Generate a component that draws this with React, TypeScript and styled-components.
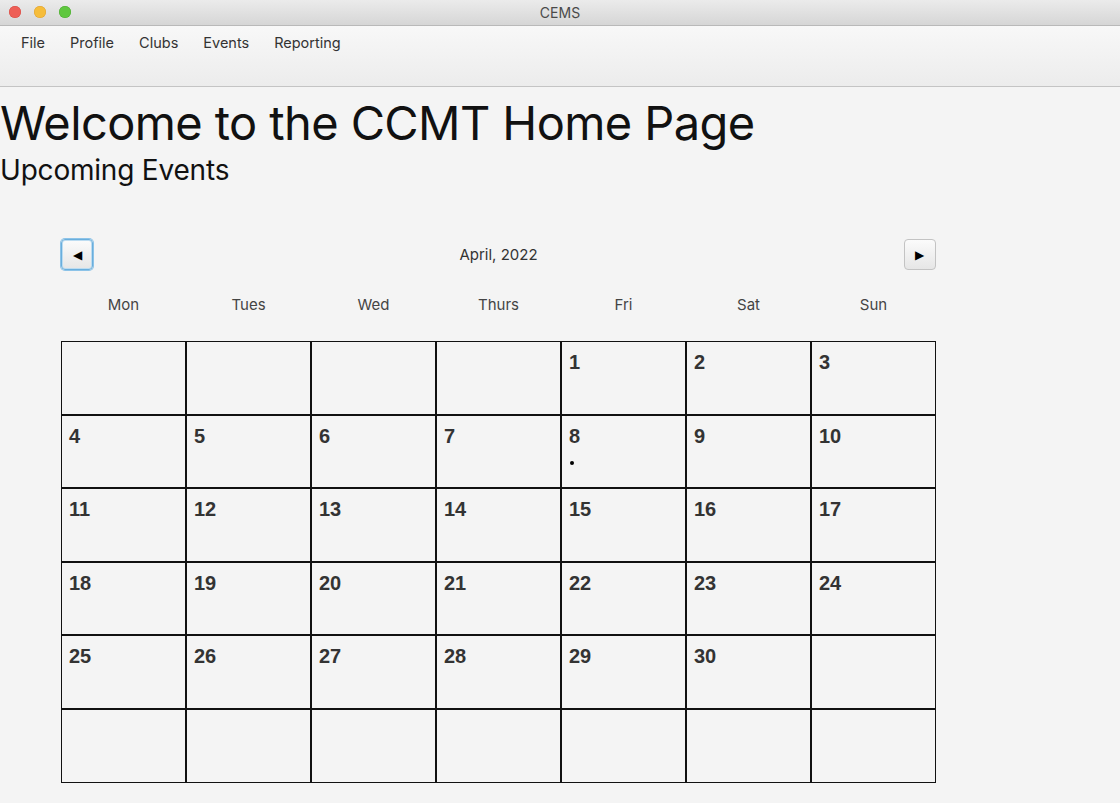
import React from "react";
import styled, { createGlobalStyle } from "styled-components";

const GlobalStyle = createGlobalStyle`
  html, body {
    margin: 0;
    padding: 0;
    background: #f4f4f4;
  }
  body {
    font-family: Inter, "Noto Sans", sans-serif;
  }
`;

const Window = styled.div`
  width: 1120px;
  height: 803px;
  display: flex;
  flex-direction: column;
  background: #f4f4f4;
  overflow: hidden;
`;

const TitleBar = styled.div`
  height: 25px;
  position: relative;
  display: flex;
  align-items: center;
  justify-content: center;
  background: linear-gradient(#ebebeb, #d6d6d6);
  border-bottom: 1px solid #b9b9b9;
  font-family: Inter, sans-serif;
  font-size: 14px;
  color: #4a4a4a;
`;

const Lights = styled.div`
  position: absolute;
  left: 9px;
  top: 6px;
  display: flex;
  gap: 13px;
`;

const Light = styled.span<{ $color: string; $edge: string }>`
  width: 12px;
  height: 12px;
  border-radius: 50%;
  background: ${(p) => p.$color};
  box-shadow: inset 0 0 0 0.5px ${(p) => p.$edge};
`;

const MenuBar = styled.div`
  height: 61px;
  display: flex;
  align-items: flex-start;
  padding: 8px 0 0 8.5px;
  box-sizing: border-box;
  background: linear-gradient(#f8f8f8, #ececec);
  border-bottom: 1px solid #c4c4c4;
`;

const MenuItem = styled.span`
  font-size: 14.5px;
  color: #333;
  padding: 0 12.5px;
  line-height: 18px;
`;

const Content = styled.main`
  display: flex;
  flex-direction: column;
`;

const Title = styled.h1`
  margin: 10px 0 0 0;
  font-weight: 400;
  font-size: 47px;
  line-height: 51px;
  color: #111;
  letter-spacing: -0.6px;
`;

const Subtitle = styled.h2`
  margin: 8px 0 0 0;
  font-weight: 400;
  font-size: 28px;
  line-height: 28px;
  color: #111;
  letter-spacing: -0.2px;
`;

const Calendar = styled.section`
  width: 875px;
  margin: 55px 0 0 61px;
  display: flex;
  flex-direction: column;
`;

const Header = styled.div`
  height: 31px;
  display: flex;
  align-items: center;
  justify-content: space-between;
`;

const NavButton = styled.button<{ $focused?: boolean }>`
  width: 32px;
  height: 31px;
  padding: 0;
  display: flex;
  align-items: center;
  justify-content: center;
  border-radius: 4px;
  border: 1px solid ${(p) => (p.$focused ? "#6aaedc" : "#c3c3c3")};
  box-shadow: ${(p) =>
    p.$focused ? "0 0 0 1px #8cc3e8, inset 0 0 0 1px #bcdcf1" : "none"};
  background: linear-gradient(#fbfbfb, #e6e6e6);
  font-size: 12px;
  color: #000;
`;

const MonthLabel = styled.span`
  font-size: 15px;
  color: #333;
`;

const DayNames = styled.div`
  display: grid;
  grid-template-columns: repeat(7, 125px);
  margin-top: 25px;
  height: 20px;
`;

const DayName = styled.span`
  text-align: center;
  font-size: 15px;
  line-height: 20px;
  color: #444;
`;

const Grid = styled.div`
  display: grid;
  grid-template-columns: repeat(7, 125px);
  grid-auto-rows: 73.6px;
  margin-top: 26px;
`;

const Cell = styled.div`
  box-sizing: border-box;
  border: 1px solid #111;
  padding: 9px 7px;
  display: flex;
  flex-direction: column;
`;

const DayNumber = styled.span`
  font-family: "Liberation Sans", Arial, sans-serif;
  font-weight: 700;
  font-size: 20px;
  color: #333;
  line-height: 22px;
`;

const EventDot = styled.span`
  width: 4px;
  height: 4px;
  margin: 14px 0 0 1px;
  border-radius: 50%;
  background: #000;
`;

const days = ["Mon", "Tues", "Wed", "Thurs", "Fri", "Sat", "Sun"];
const menus = ["File", "Profile", "Clubs", "Events", "Reporting"];
const eventDays = [8];

// April 2022 starts on a Friday (index 4 with Monday first)
const cells: (number | null)[] = Array.from({ length: 42 }, (_, i) => {
  const d = i - 3;
  return d >= 1 && d <= 30 ? d : null;
});

export default function App() {
  return (
    <Window>
      <GlobalStyle />
      <TitleBar>
        <Lights>
          <Light $color="#ee5f57" $edge="#d64c44" />
          <Light $color="#f6bd3b" $edge="#dea032" />
          <Light $color="#5fc73f" $edge="#4ba930" />
        </Lights>
        CEMS
      </TitleBar>
      <MenuBar>
        {menus.map((m) => (
          <MenuItem key={m}>{m}</MenuItem>
        ))}
      </MenuBar>
      <Content>
        <Title>Welcome to the CCMT Home Page</Title>
        <Subtitle>Upcoming Events</Subtitle>
        <Calendar>
          <Header>
            <NavButton $focused aria-label="Previous month">
              ◀
            </NavButton>
            <MonthLabel>April, 2022</MonthLabel>
            <NavButton aria-label="Next month">▶</NavButton>
          </Header>
          <DayNames>
            {days.map((d) => (
              <DayName key={d}>{d}</DayName>
            ))}
          </DayNames>
          <Grid>
            {cells.map((d, i) => (
              <Cell key={i}>
                {d && <DayNumber>{d}</DayNumber>}
                {d && eventDays.includes(d) && <EventDot />}
              </Cell>
            ))}
          </Grid>
        </Calendar>
      </Content>
    </Window>
  );
}
